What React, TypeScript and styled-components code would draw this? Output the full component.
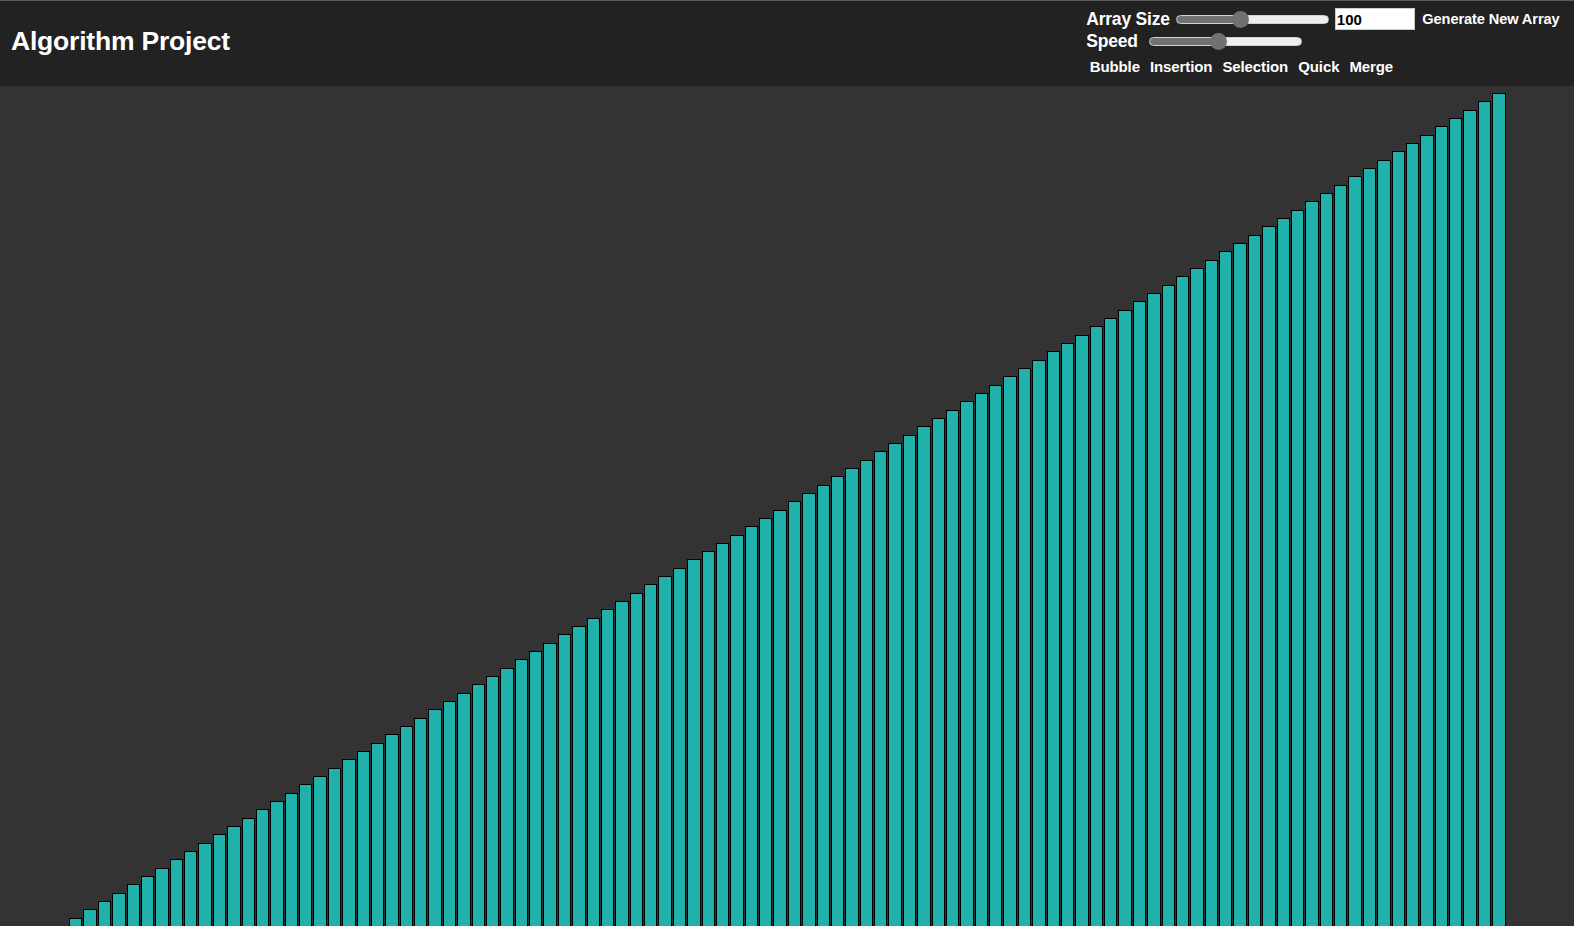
import React, { useState } from 'react';
import styled, { createGlobalStyle } from 'styled-components';

const GlobalStyle = createGlobalStyle`
  html, body {
    margin: 0;
    padding: 0;
    height: 100%;
    background: #333333;
    font-family: "Liberation Sans", Arial, sans-serif;
    overflow: hidden;
  }
  #root {
    height: 100%;
  }
`;

const Page = styled.div`
  display: flex;
  flex-direction: column;
  height: 100vh;
`;

const Header = styled.header`
  display: flex;
  justify-content: space-between;
  align-items: center;
  height: 85px;
  background: #222222;
  border-top: 1px solid #5c5c5c;
  padding: 0 10px 0 11px;
  flex-shrink: 0;
`;

const Title = styled.h1`
  margin: 0;
  color: #ffffff;
  font-size: 26.5px;
  font-weight: 700;
  letter-spacing: -0.2px;
  padding-bottom: 4px;
`;

const Controls = styled.div`
  display: flex;
  flex-direction: column;
  align-self: flex-start;
  padding-top: 7px;
`;

const Row = styled.div<{ gap?: number }>`
  display: flex;
  align-items: center;
  height: 22px;
  gap: ${props => props.gap || 6}px;
`;

const Label = styled.span`
  color: #ffffff;
  font-size: 17.5px;
  font-weight: 700;
  letter-spacing: -0.2px;
`;

const Slider = styled.input`
  -webkit-appearance: none;
  appearance: none;
  width: 153px;
  height: 9px;
  margin: 0;
  border-radius: 5px;
  border: 1px solid #d0d0d0;
  outline: none;
  box-sizing: border-box;

  &::-webkit-slider-thumb {
    -webkit-appearance: none;
    appearance: none;
    width: 17px;
    height: 17px;
    border-radius: 50%;
    background: #717171;
    border: none;
    cursor: pointer;
  }
`;

const SizeInput = styled.input`
  width: 80px;
  height: 22px;
  box-sizing: border-box;
  border: 1px solid #cccccc;
  padding: 0 1px;
  margin-right: -3px;
  font-family: "Liberation Sans", Arial, sans-serif;
  font-size: 15px;
  font-weight: 700;
  color: #000000;
  background: #ffffff;
`;

const TextButton = styled.button<{ small?: boolean }>`
  background: none;
  border: none;
  color: #ffffff;
  font-family: "Liberation Sans", Arial, sans-serif;
  font-size: ${props => (props.small ? 14.6 : 15)}px;
  font-weight: 700;
  letter-spacing: -0.1px;
  padding: 0 4.5px;
  cursor: pointer;
`;

const ButtonRow = styled.div`
  display: flex;
  align-items: center;
  gap: 1px;
  height: 24px;
  margin-top: 2px;
  margin-left: -1px;
`;

const Stage = styled.div`
  flex: 1;
  display: flex;
  justify-content: center;
  align-items: flex-end;
  overflow: hidden;
`;

const Bars = styled.div`
  display: flex;
  align-items: flex-end;
  gap: 1px;
  width: 1436px;
`;

const Bar = styled.div`
  flex: 1;
  background: #20b2aa;
  border: 1px solid #000000;
  border-bottom: none;
  box-sizing: border-box;
`;

const fill = (v: number) =>
  `linear-gradient(to right, #717171 0%, #717171 ${v}%, #eeeeee ${v}%, #eeeeee 100%)`;

const App: React.FC = () => {
  const [size, setSize] = useState(41);
  const [speed, setSpeed] = useState(45);
  const values = Array.from({ length: 100 }, (_, i) => i + 1);

  return (
    <Page>
      <GlobalStyle />
      <Header>
        <Title>Algorithm Project</Title>
        <Controls>
          <Row>
            <Label>Array Size</Label>
            <Slider
              type="range"
              min={0}
              max={100}
              value={size}
              onChange={e => setSize(Number(e.target.value))}
              style={{ background: fill(size) }}
            />
            <SizeInput type="text" defaultValue="100" />
            <TextButton small>Generate New Array</TextButton>
          </Row>
          <Row gap={11}>
            <Label>Speed</Label>
            <Slider
              type="range"
              min={0}
              max={100}
              value={speed}
              onChange={e => setSpeed(Number(e.target.value))}
              style={{ background: fill(speed) }}
            />
          </Row>
          <ButtonRow>
            <TextButton>Bubble</TextButton>
            <TextButton>Insertion</TextButton>
            <TextButton>Selection</TextButton>
            <TextButton>Quick</TextButton>
            <TextButton>Merge</TextButton>
          </ButtonRow>
        </Controls>
      </Header>
      <Stage>
        <Bars>
          {values.map(v => (
            <Bar key={v} style={{ height: `${(v * 833) / 100}px` }} />
          ))}
        </Bars>
      </Stage>
    </Page>
  );
};

export default App;
